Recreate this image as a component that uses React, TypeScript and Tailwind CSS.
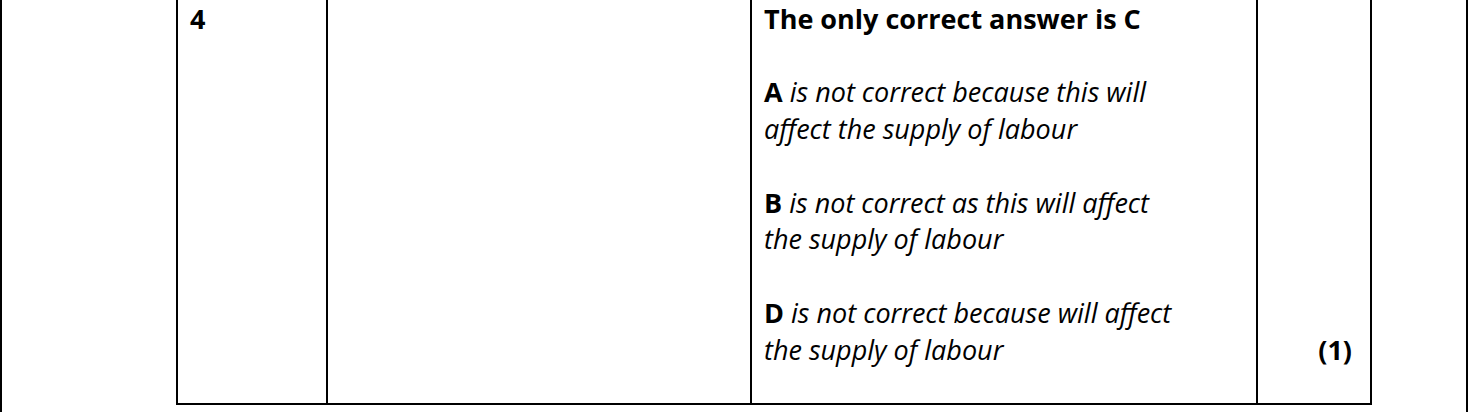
export default function App() {
  return (
    <div className="w-[1468px] h-[412px] bg-white border-x-2 border-black text-black font-['Open_Sans',sans-serif]">
      <div className="ml-[174px] flex h-[405px] w-[1196px] border-l-2 border-b-2 border-black text-[27px] leading-[36.5px]">
        <div className="w-[150px] shrink-0 border-r-2 border-black pl-[12px] pt-[1px] font-bold">4</div>
        <div className="w-[424px] shrink-0 border-r-2 border-black"></div>
        <div className="w-[506px] shrink-0 border-r-2 border-black pl-[12px] pt-[1px]">
          <p className="font-bold">The only correct answer is C</p>
          <p className="mt-[36.5px]">
            <span className="font-bold">A</span> <i>is not correct because this will</i>
            <br />
            <i>affect the supply of labour</i>
          </p>
          <p className="mt-[37.5px]">
            <span className="font-bold">B</span> <i>is not correct as this will affect</i>
            <br />
            <i>the supply of labour</i>
          </p>
          <p className="mt-[37.5px]">
            <span className="font-bold">D</span> <i>is not correct because will affect</i>
            <br />
            <i>the supply of labour</i>
          </p>
        </div>
        <div className="w-[114px] shrink-0 border-r-2 border-black flex flex-col justify-end items-end pr-[18px] pb-[35px] font-bold">
          (1)
        </div>
      </div>
    </div>
  )
}
